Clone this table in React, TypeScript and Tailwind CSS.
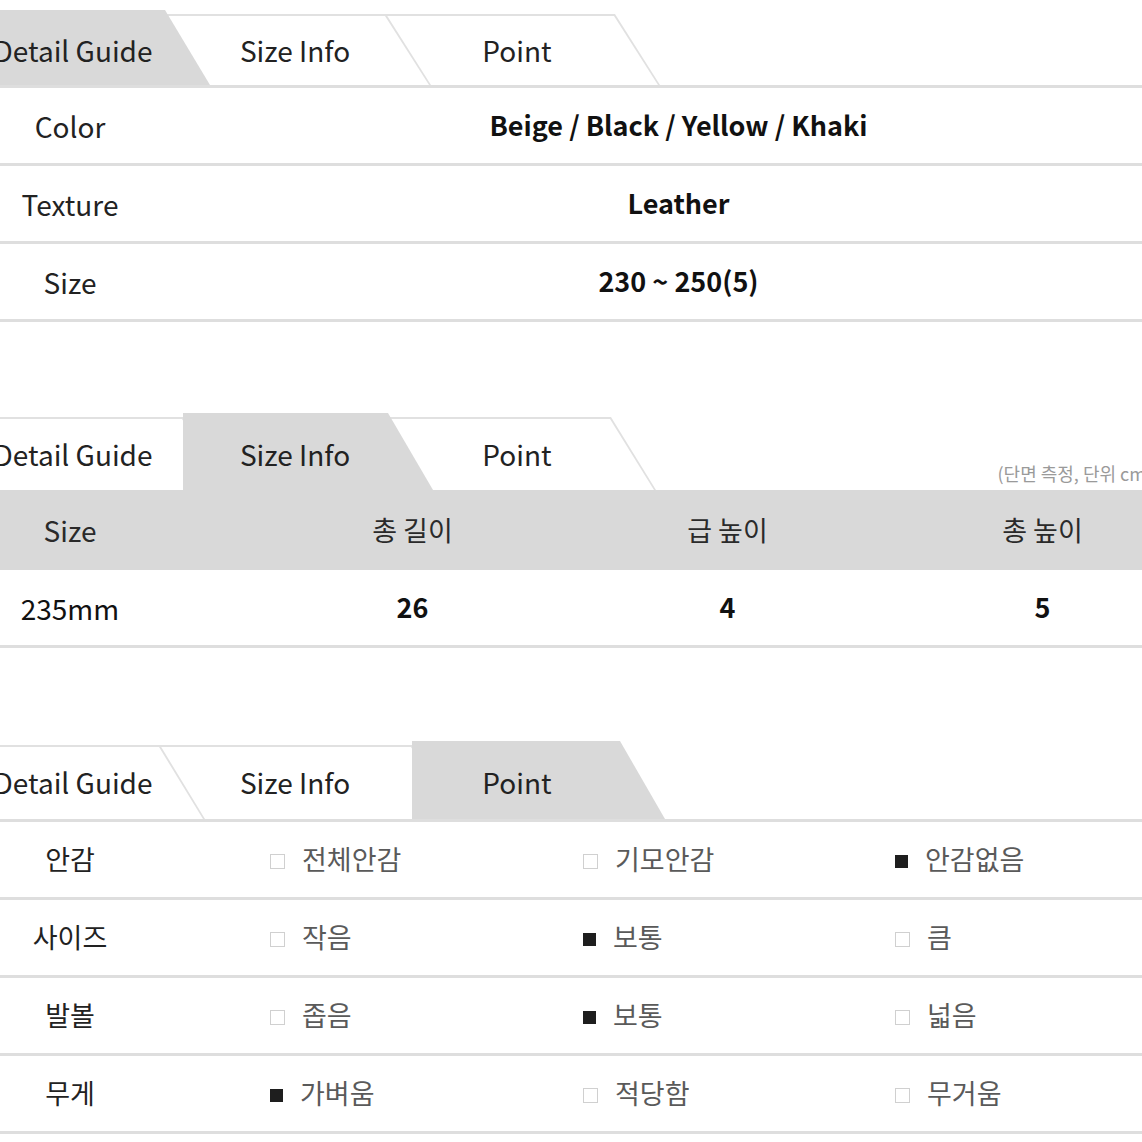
import type { ReactNode } from "react";

const FONT = "font-['Noto_Sans_CJK_KR','Noto_Sans',sans-serif]";

type TabDef = {
  label: string;
  active?: boolean;
  z: string;
  shape: string;
};

function Tab({ label, active, z, shape }: TabDef) {
  return (
    <div className={`relative flex h-full w-[222px] shrink-0 items-center justify-center pt-[4px] ${z}`}>
      {active ? (
        <div
          className={`absolute top-0 bottom-0 bg-[#d9d9d9] [clip-path:polygon(0_0,calc(100%_-_45px)_0,100%_100%,0_100%)] ${shape}`}
        />
      ) : (
        <div
          className={`absolute top-[4px] bottom-0 bg-[#e1e1e1] [clip-path:polygon(0_0,calc(100%_-_45px)_0,100%_100%,0_100%)] ${shape}`}
        >
          <div className="absolute top-[2px] bottom-0 left-0 right-[2px] bg-white [clip-path:polygon(0_0,calc(100%_-_44px)_0,100%_100%,0_100%)]" />
        </div>
      )}
      <span className="relative text-[28px] leading-none text-[#222]">{label}</span>
    </div>
  );
}

function TabStrip({ tabs, height, children }: { tabs: TabDef[]; height: string; children?: ReactNode }) {
  return (
    <div className={`-ml-[38px] flex ${height}`}>
      {tabs.map((t) => (
        <Tab key={t.label} {...t} />
      ))}
      {children}
    </div>
  );
}

function Box({ on }: { on?: boolean }) {
  return on ? (
    <span className="mt-[3px] h-[13px] w-[13px] shrink-0 bg-[#1e1e1e]" />
  ) : (
    <span className="mt-[3px] h-[15px] w-[15px] shrink-0 border border-[#d0d0d0] bg-white" />
  );
}

const DETAIL_ROWS = [
  { label: "Color", value: "Beige / Black / Yellow / Khaki" },
  { label: "Texture", value: "Leather" },
  { label: "Size", value: "230 ~ 250(5)" },
];

const POINT_ROWS = [
  { label: "안감", options: ["전체안감", "기모안감", "안감없음"], pick: 2 },
  { label: "사이즈", options: ["작음", "보통", "큼"], pick: 1 },
  { label: "발볼", options: ["좁음", "보통", "넓음"], pick: 1 },
  { label: "무게", options: ["가벼움", "적당함", "무거움"], pick: 0 },
];

export default function App() {
  return (
    <div className={`h-[1142px] w-[1142px] overflow-hidden bg-white pt-[10px] ${FONT}`}>
      {/* Detail Guide */}
      <TabStrip
        height="h-[75px]"
        tabs={[
          { label: "Detail Guide", active: true, z: "z-30", shape: "left-[-30px] right-[-26px]" },
          { label: "Size Info", z: "z-20", shape: "left-[-30px] right-[-25px]" },
          { label: "Point", z: "z-10", shape: "left-[-30px] right-[-32px]" },
        ]}
      />
      <div className="border-t-[3px] border-[#dedede]">
        {DETAIL_ROWS.map((r) => (
          <div
            key={r.label}
            className="grid h-[78px] grid-cols-[215px_1fr] items-center border-b-[3px] border-[#dedede]"
          >
            <div className="w-[140px] text-center text-[28px] text-[#222]">{r.label}</div>
            <div className="text-center text-[27px] font-semibold text-[#111]">{r.value}</div>
          </div>
        ))}
      </div>

      {/* Size Info */}
      <div className="mt-[91px]">
        <TabStrip
          height="h-[77px]"
          tabs={[
            { label: "Detail Guide", z: "z-20", shape: "left-[-30px] right-[-44px]" },
            { label: "Size Info", active: true, z: "z-30", shape: "left-[-1px] right-[-27px]" },
            { label: "Point", z: "z-10", shape: "left-[-30px] right-[-28px]" },
          ]}
        >
          <div className="mb-[8px] ml-auto mr-[-10px] self-end whitespace-nowrap text-[18px] leading-none text-[#9a9a9a]">
            (단면 측정, 단위 cm)
          </div>
        </TabStrip>
        <div className="grid h-[80px] grid-cols-[255px_315px_315px_315px] items-center bg-[#d9d9d9] text-[#2a2a2a]">
          <div className="w-[140px] text-center text-[28px]">Size</div>
          <div className="text-center text-[27px]">총 길이</div>
          <div className="text-center text-[27px]">급 높이</div>
          <div className="text-center text-[27px]">총 높이</div>
        </div>
        <div className="grid h-[78px] grid-cols-[255px_315px_315px_315px] items-center border-b-[3px] border-[#dedede] text-[28px] text-[#111]">
          <div className="w-[140px] text-center">235mm</div>
          <div className="text-center text-[27px] font-semibold">26</div>
          <div className="text-center text-[27px] font-semibold">4</div>
          <div className="text-center text-[27px] font-semibold">5</div>
        </div>
      </div>

      {/* Point */}
      <div className="mt-[93px]">
        <TabStrip
          height="h-[78px]"
          tabs={[
            { label: "Detail Guide", z: "z-20", shape: "left-[-30px] right-[-21px]" },
            { label: "Size Info", z: "z-10", shape: "left-[-30px] right-[-51px]" },
            { label: "Point", active: true, z: "z-30", shape: "left-[6px] right-[-37px]" },
          ]}
        />
        <div className="border-t-[3px] border-[#dedede]">
          {POINT_ROWS.map((r) => (
            <div
              key={r.label}
              className="grid h-[78px] grid-cols-[270px_313px_312px_1fr] items-center border-b-[3px] border-[#dedede]"
            >
              <div className="w-[140px] text-center text-[27px] text-[#222]">{r.label}</div>
              {r.options.map((o, i) => (
                <div key={o + i} className="flex items-center gap-[17px] text-[27px] text-[#5a5a5a]">
                  <Box on={i === r.pick} />
                  <span>{o}</span>
                </div>
              ))}
            </div>
          ))}
        </div>
      </div>
    </div>
  );
}
